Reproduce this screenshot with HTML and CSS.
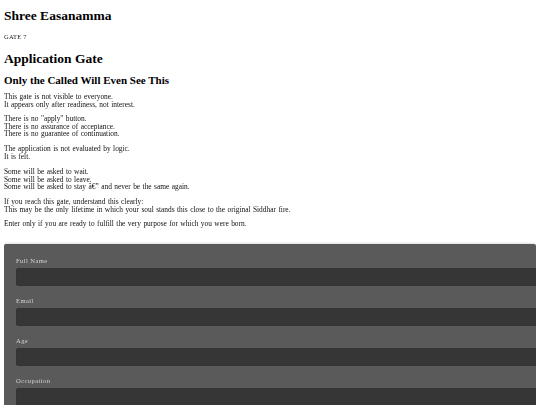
FILE: index.html
```html
<!DOCTYPE html>
<html>
<head>
<meta charset="utf-8">
<link rel="stylesheet" href="styles.css">
</head>
<body>
<h1 class="site-title">Shree Easanamma</h1>
<p class="gate-no">GATE 7</p>
<h1 class="page-title">Application Gate</h1>
<h2 class="subtitle">Only the Called Will Even See This</h2>
<p class="txt">This gate is not visible to everyone.<br>It appears only after readiness, not interest.</p>
<p class="txt">There is no "apply" button.<br>There is no assurance of acceptance.<br>There is no guarantee of continuation.</p>
<p class="txt">The application is not evaluated by logic.<br>It is felt.</p>
<p class="txt">Some will be asked to wait.<br>Some will be asked to leave.<br>Some will be asked to stay â€” and never be the same again.</p>
<p class="txt">If you reach this gate, understand this clearly:<br>This may be the only lifetime in which your soul stands this close to the original Siddhar fire.</p>
<p class="txt">Enter only if you are ready to fulfill the very purpose for which you were born.</p>
<form class="card">
  <label class="lbl">Full Name</label>
  <input class="inp" type="text">
  <label class="lbl">Email</label>
  <input class="inp" type="text">
  <label class="lbl">Age</label>
  <input class="inp" type="text">
  <label class="lbl">Occupation</label>
  <input class="inp" type="text">
</form>
</body>
</html>
```
FILE: styles.css
```css
html, body { margin: 0; padding: 0; }
body {
  margin: 4px;
  font-family: "Liberation Serif", "Times New Roman", serif;
  color: #000;
  background: #fff;
}
.site-title {
  font-size: 13.5px;
  line-height: 15px;
  font-weight: bold;
  margin: 4px 0 10px;
}
.gate-no {
  font-size: 6.5px;
  letter-spacing: 0.2px;
  line-height: 7px;
  margin: 0 0 11px;
  color: #222;
  will-change: transform;
}
.page-title {
  font-size: 13.5px;
  line-height: 15px;
  font-weight: bold;
  margin: 0 0 7.5px;
}
.subtitle {
  font-size: 11px;
  line-height: 13px;
  font-weight: bold;
  margin: 0 0 6.5px;
}
.txt {
  font-size: 7.4px;
  line-height: 7.6px;
  word-spacing: 0.6px;
  margin: 0 0 7.2px;
  color: #111;
  will-change: transform;
}
.card {
  margin-top: 16.3px;
  background: #5a5a5a;
  border-radius: 2px;
  padding: 13px 12px 12px;
  box-shadow: 0 0 3px rgba(0,0,0,0.25);
}
.lbl {
  display: block;
  color: #d4d4d4;
  font-size: 6.5px;
  letter-spacing: 0.45px;
  line-height: 8px;
  margin-bottom: 3px;
  will-change: transform;
}
.inp {
  display: block;
  width: 100%;
  height: 16px;
  padding: 0 6px;
  border: 1px solid #343434;
  border-radius: 2px;
  background: #363636;
  margin: 0 0 11px;
  font-family: inherit;
}
```
